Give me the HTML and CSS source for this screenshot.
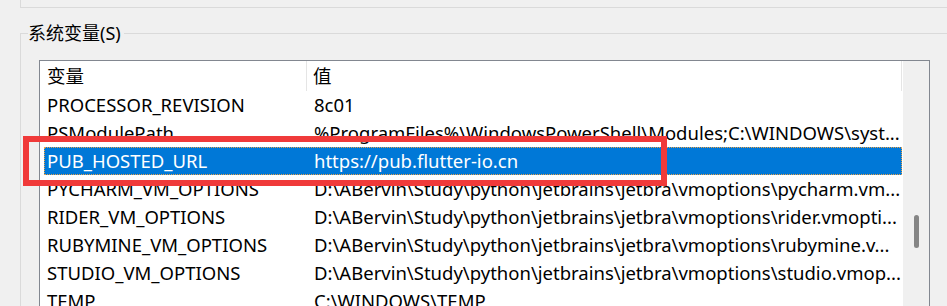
FILE: index.html
```html
<!DOCTYPE html>
<html lang="zh-CN">
<head>
  <meta charset="UTF-8" />
  <title>环境变量</title>
  <link rel="stylesheet" href="styles.css">
</head>
<body>
  <div class="upper-group"></div>

  <fieldset class="group">
    <legend>系统变量(S)</legend>

    <div class="listview">
      <div class="list-body">
        <div class="list-head">
          <div class="col-name">变量</div>
          <div class="col-value">值</div>
        </div>

        <div class="row">
          <div class="col-name">PROCESSOR_REVISION</div>
          <div class="col-value">8c01</div>
        </div>
        <div class="row">
          <div class="col-name">PSModulePath</div>
          <div class="col-value">%ProgramFiles%\WindowsPowerShell\Modules;C:\WINDOWS\syst...</div>
        </div>
        <div class="row selected">
          <div class="col-name">PUB_HOSTED_URL</div>
          <div class="col-value">https://pub.flutter-io.cn</div>
        </div>
        <div class="row">
          <div class="col-name">PYCHARM_VM_OPTIONS</div>
          <div class="col-value">D:\ABervin\Study\python\jetbrains\jetbra\vmoptions\pycharm.vm...</div>
        </div>
        <div class="row">
          <div class="col-name">RIDER_VM_OPTIONS</div>
          <div class="col-value">D:\ABervin\Study\python\jetbrains\jetbra\vmoptions\rider.vmopti...</div>
        </div>
        <div class="row">
          <div class="col-name">RUBYMINE_VM_OPTIONS</div>
          <div class="col-value">D:\ABervin\Study\python\jetbrains\jetbra\vmoptions\rubymine.v...</div>
        </div>
        <div class="row">
          <div class="col-name">STUDIO_VM_OPTIONS</div>
          <div class="col-value">D:\ABervin\Study\python\jetbrains\jetbra\vmoptions\studio.vmop...</div>
        </div>
        <div class="row">
          <div class="col-name">TEMP</div>
          <div class="col-value">C:\WINDOWS\TEMP</div>
        </div>
      </div>

      <div class="scrollbar">
        <div class="thumb"></div>
      </div>
    </div>
  </fieldset>

  <div class="highlight-box"></div>
</body>
</html>
```

FILE: styles.css
```css
body {
  margin: 0;
  height: 306px;
  overflow: hidden;
  position: relative;
  background-color: #f0f0f0;
  color: #000000;
  font-family: "Noto Sans", "Noto Sans CJK SC", sans-serif;
  font-size: 18.5px;
}

.upper-group {
  height: 7px;
  margin-left: 20px;
  border-left: 1px solid #dadada;
  border-bottom: 1px solid #dadada;
}

.group {
  box-sizing: border-box;
  width: 1000px;
  margin: 14px 0 0 20px;
  padding: 0 0 0 18px;
  border: 1px solid #dadada;
  min-width: 0;
}

.group legend {
  margin-left: -11px;
  padding: 0 3px 0 0;
  font-size: 18px;
  line-height: 22px;
}

.listview {
  display: flex;
  box-sizing: border-box;
  width: 891px;
  height: 260px;
  margin-top: 16px;
  border: 1px solid #828790;
  background-color: #ffffff;
}

.list-body {
  flex: 1;
  padding: 0 1px 0 4px;
  overflow: hidden;
}

.list-head,
.row {
  display: flex;
  white-space: nowrap;
}

.list-head {
  height: 30px;
  line-height: 30px;
}

.row {
  height: 28px;
  line-height: 28px;
}

.col-name {
  box-sizing: border-box;
  width: 263px;
  flex-shrink: 0;
  padding-left: 3px;
}

.col-value {
  flex: 1;
  padding-left: 7px;
  overflow: hidden;
}

.list-head .col-name {
  border-right: 1px solid #e5e5e5;
}

.list-head .col-value {
  padding-left: 6px;
  border-right: 1px solid #e5e5e5;
}

.row.selected {
  background-color: #0078d7;
  color: #ffffff;
  outline: 1px dotted #e8a24a;
  outline-offset: -1px;
}

.scrollbar {
  width: 26px;
  background-color: #f0f0f0;
}

.thumb {
  width: 5px;
  height: 33px;
  margin: 154px auto 0;
  border-radius: 3px;
  background-color: #858585;
}

.highlight-box {
  position: absolute;
  left: 23px;
  top: 136px;
  box-sizing: border-box;
  width: 644px;
  height: 50px;
  border: 6px solid #f03a3a;
}
```
